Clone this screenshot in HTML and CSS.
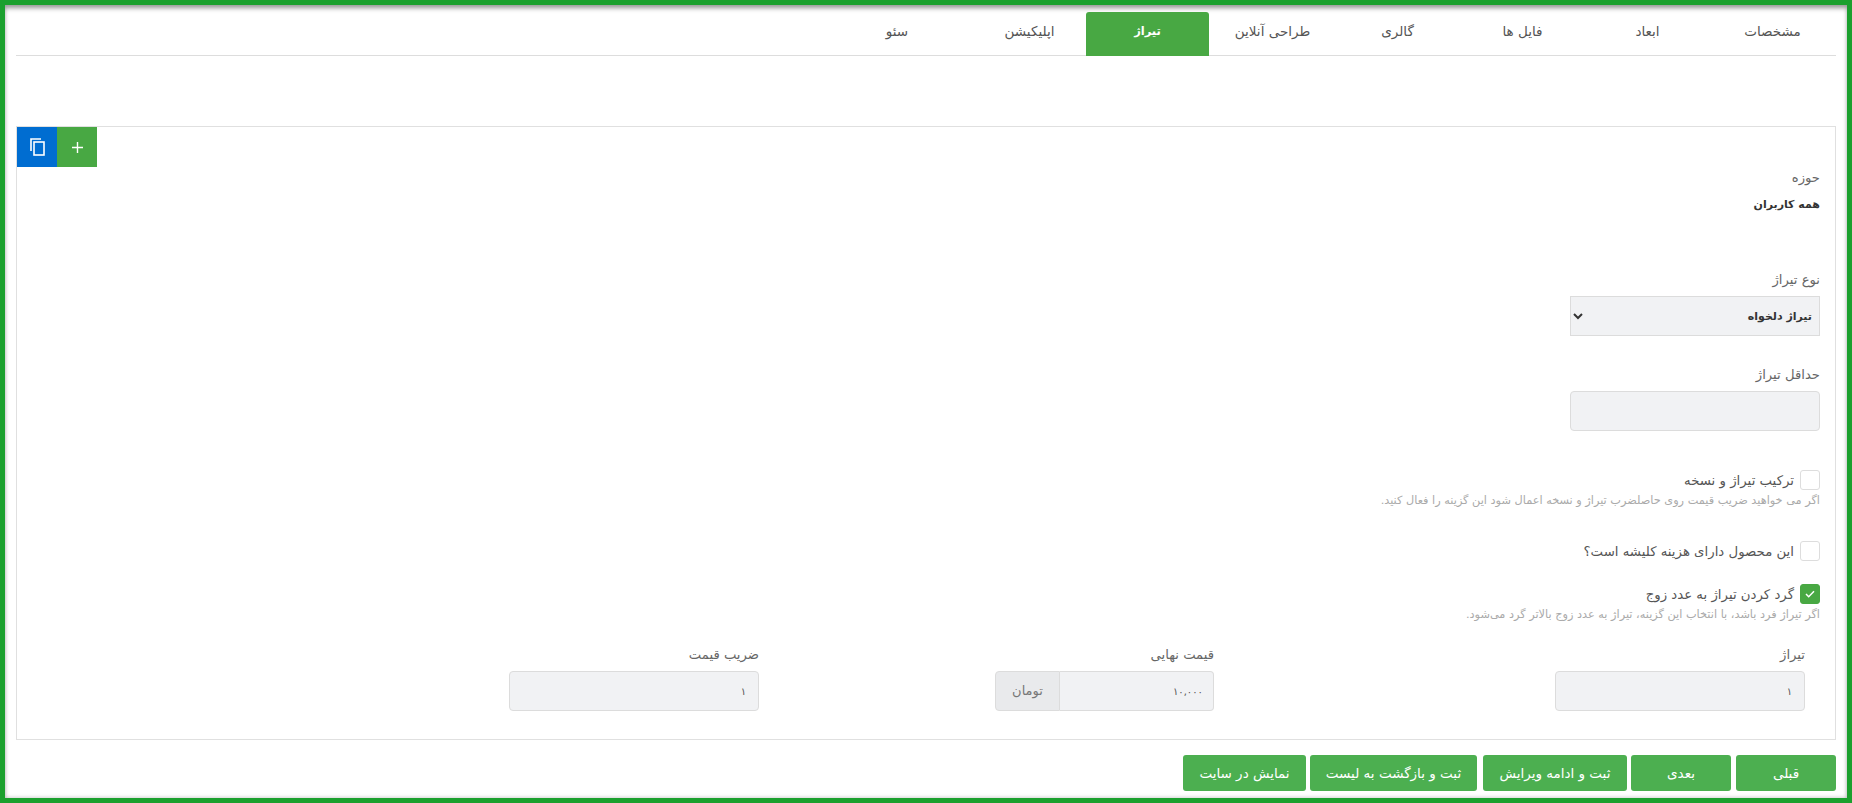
FILE: index.html
```html
<!DOCTYPE html>
<html lang="fa" dir="rtl">
<head>
    <meta charset="UTF-8">
    <meta name="viewport" content="width=device-width, initial-scale=1.0">
    <title>تیراژ</title>
    <link rel="stylesheet" href="styles.css">
</head>
<body>
    <div class="frame">
        <ul class="tabs">
            <li class="tab">مشخصات</li>
            <li class="tab">ابعاد</li>
            <li class="tab">فایل ها</li>
            <li class="tab">گالری</li>
            <li class="tab">طراحی آنلاین</li>
            <li class="tab active">تیراژ</li>
            <li class="tab tab-app">اپلیکیشن</li>
            <li class="tab tab-seo">سئو</li>
        </ul>

        <div class="box">
            <div class="toolbar">
                <button type="button" class="tool tool-add">
                    <svg width="11" height="11" viewBox="0 0 11 11"><path d="M5.5 0v11M0 5.5h11" stroke="#fff" stroke-width="1.4" fill="none"/></svg>
                </button>
                <button type="button" class="tool tool-copy">
                    <svg width="15" height="18" viewBox="0 0 15 18"><path d="M1 13V1h10" stroke="#fff" stroke-width="1.6" fill="none"/><rect x="4" y="4" width="10" height="13" stroke="#fff" stroke-width="1.6" fill="none"/></svg>
                </button>
            </div>

            <div class="scope">
                <div class="label">حوزه</div>
                <div class="scope-value">همه کاربران</div>
            </div>

            <div class="group group-type">
                <label class="label" for="type">نوع تیراژ</label>
                <select id="type" class="select">
                    <option>تیراژ دلخواه</option>
                </select>
            </div>

            <div class="group group-min">
                <label class="label" for="min">حداقل تیراژ</label>
                <input id="min" class="input" type="text">
            </div>

            <div class="check check-first">
                <span class="box-check"></span>
                <span class="check-text">ترکیب تیراژ و نسخه</span>
            </div>
            <div class="hint">اگر می خواهید ضریب قیمت روی حاصلضرب تیراژ و نسخه اعمال شود این گزینه را فعال کنید.</div>

            <div class="check check-second">
                <span class="box-check"></span>
                <span class="check-text">این محصول دارای هزینه کلیشه است؟</span>
            </div>

            <div class="check check-third">
                <span class="box-check checked">
                    <svg width="10" height="8" viewBox="0 0 10 8"><path d="M1 4l2.7 2.7L9 1.3" stroke="#fff" stroke-width="1.5" fill="none"/></svg>
                </span>
                <span class="check-text">گرد کردن تیراژ به عدد زوج</span>
            </div>
            <div class="hint">اگر تیراژ فرد باشد، با انتخاب این گزینه، تیراژ به عدد زوج بالاتر گرد می‌شود.</div>

            <div class="price-row">
                <div class="price-col">
                    <div class="label">تیراژ</div>
                    <input class="input input-wide" type="text" value="۱" readonly>
                </div>
                <div class="price-col">
                    <div class="label">قیمت نهایی</div>
                    <div class="input-group">
                        <input class="input group-input" type="text" value="۱۰,۰۰۰" readonly>
                        <span class="addon">تومان</span>
                    </div>
                </div>
                <div class="price-col">
                    <div class="label">ضریب قیمت</div>
                    <input class="input input-wide" type="text" value="۱" readonly>
                </div>
            </div>
        </div>

        <div class="actions">
            <button type="button" class="btn btn-prev">قبلی</button>
            <button type="button" class="btn btn-next">بعدی</button>
            <button type="button" class="btn btn-edit">ثبت و ادامه ویرایش</button>
            <button type="button" class="btn btn-back">ثبت و بازگشت به لیست</button>
            <button type="button" class="btn btn-show">نمایش در سایت</button>
        </div>
    </div>
</body>
</html>
```

FILE: styles.css
```css
* {
    box-sizing: border-box;
}
body {
    margin: 0;
    background: #fff;
    font-family: "DejaVu Sans", sans-serif;
    font-size: 13px;
    color: #444;
}
.frame {
    height: 803px;
    padding: 7px 11px 0;
    border: 5px solid #1ba02e;
    box-shadow: inset 0 5px 5px -2px #999, inset 0 0 4px #bbb;
    overflow: hidden;
}

/* tabs */
.tabs {
    display: flex;
    height: 44px;
    margin: 0;
    padding: 0 2px 0 0;
    list-style: none;
    border-bottom: 1px solid #ddd;
}
.tab {
    width: 123px;
    height: 44px;
    margin-left: 2px;
    border-radius: 3px 3px 0 0;
    text-align: center;
    line-height: 39px;
    font-size: 13.5px;
    color: #555;
}
.tab.active {
    background: #48a843;
    color: #fff;
    font-weight: bold;
    font-size: 11.5px;
}
.tab-app {
    width: 109px;
}
.tab-seo {
    width: 152px;
}

/* main box */
.box {
    height: 614px;
    margin-top: 70px;
    padding-right: 15px;
    border: 1px solid #e0e0e0;
}
.toolbar {
    display: flex;
    justify-content: flex-end;
    height: 40px;
}
.tool {
    display: flex;
    align-items: center;
    justify-content: center;
    width: 40px;
    height: 40px;
    padding: 0;
    border: 0;
}
.tool-add {
    background: #48a843;
}
.tool-copy {
    background: #006dd1;
}
.label {
    display: block;
    height: 20px;
    line-height: 20px;
    font-size: 13.2px;
    color: #666;
}
.scope {
    margin-top: 1px;
}
.scope-value {
    margin-top: 7px;
    height: 20px;
    line-height: 20px;
    font-size: 11px;
    font-weight: bold;
    color: #333;
}
.group {
    width: 250px;
}
.group-type {
    margin-top: 55px;
}
.group-min {
    margin-top: 29px;
}
.select {
    display: block;
    width: 250px;
    height: 40px;
    margin-top: 6px;
    padding: 0 3px 0 0;
    border: 1px solid #dcdcdc;
    border-radius: 0;
    background-color: #f1f2f4;
    font-family: inherit;
    font-size: 11px;
    font-weight: bold;
    color: #333;
}
.input {
    display: block;
    width: 250px;
    height: 40px;
    margin-top: 6px;
    padding: 0 12px;
    border: 1px solid #dcdcdc;
    border-radius: 4px;
    background: #f1f2f4;
    font-family: inherit;
    font-size: 10px;
    color: #555;
}

/* checkboxes */
.check {
    display: flex;
    align-items: center;
    height: 20px;
}
.check-first {
    margin-top: 39px;
}
.check-second {
    margin-top: 32px;
}
.check-third {
    margin-top: 23px;
}
.box-check {
    display: flex;
    align-items: center;
    justify-content: center;
    width: 20px;
    height: 20px;
    border: 1px solid #ddd;
    border-radius: 3px;
    background: #fff;
}
.box-check.checked {
    border-color: #48a843;
    background: #48a843;
}
.check-text {
    margin-right: 6px;
    font-size: 13.3px;
    color: #555;
}
.hint {
    height: 16px;
    margin-top: 3px;
    line-height: 16px;
    font-size: 11.3px;
    color: #aaa;
}

/* price row */
.price-row {
    display: grid;
    grid-template-columns: 591px 455px 250px;
    margin-top: 22px;
    padding-right: 15px;
}
.price-col .input-wide {
    margin-top: 6px;
}
.input-group {
    display: flex;
    width: 219px;
    height: 40px;
    margin-top: 6px;
}
.group-input {
    width: 154px;
    margin: 0;
    padding-right: 10px;
    border-radius: 0 4px 4px 0;
    border-left: 0;
}
.addon {
    width: 65px;
    height: 40px;
    border: 1px solid #dcdcdc;
    border-radius: 4px 0 0 4px;
    background: #e9eaec;
    text-align: center;
    line-height: 38px;
    color: #777;
}

/* bottom buttons */
.actions {
    display: flex;
    margin-top: 15px;
}
.btn {
    height: 36px;
    padding: 0;
    border: 0;
    border-radius: 3px;
    background: #4caf50;
    font-family: inherit;
    font-size: 13.5px;
    color: #fff;
}
.btn-prev {
    width: 100px;
    margin-left: 5px;
}
.btn-next {
    width: 100px;
    margin-left: 4px;
}
.btn-edit {
    width: 144px;
    margin-left: 6px;
}
.btn-back {
    width: 167px;
    margin-left: 4px;
}
.btn-show {
    width: 123px;
}
```
